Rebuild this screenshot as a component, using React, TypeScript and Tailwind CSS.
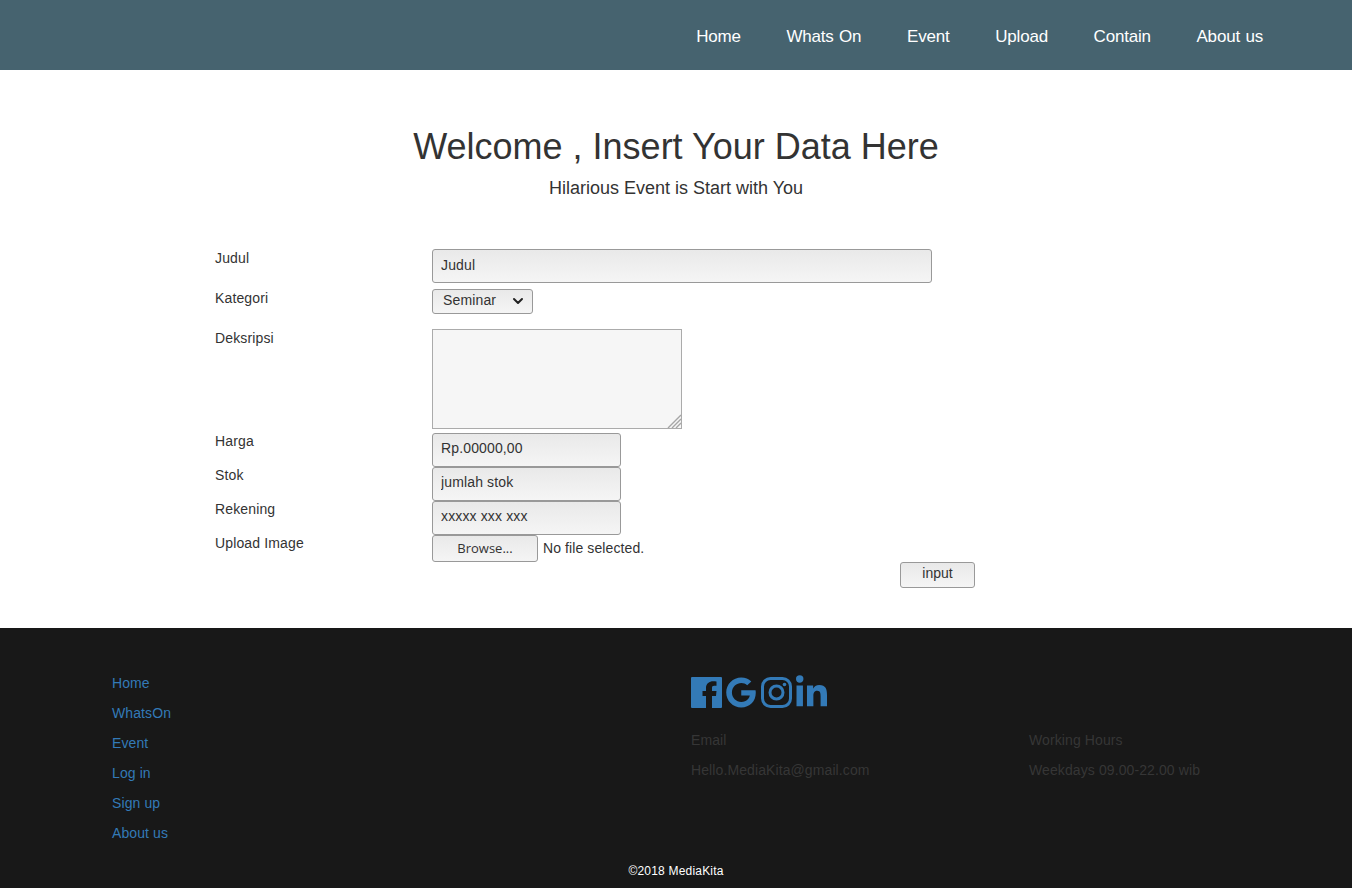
import { ChevronDown } from 'lucide-react';
import { FaGoogle, FaLinkedinIn } from 'react-icons/fa';

const navItems = ['Home', 'Whats On', 'Event', 'Upload', 'Contain', 'About us'];
const footerLinks = ['Home', 'WhatsOn', 'Event', 'Log in', 'Sign up', 'About us'];

const inputClass =
  'block h-[34px] rounded-[3px] border border-[#999] bg-gradient-to-b from-[#e9e9e9] to-[#f5f5f5] px-2 text-[14px] tracking-[0.14px] text-[#333] outline-none';

function Label({ children }: { children: string }) {
  return <div className="text-[14px] leading-[20px] tracking-[0.14px] text-[#333]">{children}</div>;
}

export default function App() {
  return (
    <div className="min-h-[888px] bg-white font-['Liberation_Sans',Arial,sans-serif] text-[#333]">
      {/* Header */}
      <header className="flex h-[70px] items-center justify-end gap-[45.7px] bg-[#46636f] pr-[89px] pt-[3px]">
        {navItems.map((item) => (
          <a key={item} className="text-[17px] tracking-[-0.2px] [word-spacing:1px] text-white">
            {item}
          </a>
        ))}
      </header>

      {/* Heading */}
      <div className="pt-[53px] text-center">
        <h1 className="text-[36px] leading-[48px]">Welcome , Insert Your Data Here</h1>
        <p className="mt-[4px] text-[18px] leading-[26px]">Hilarious Event is Start with You</p>
      </div>

      {/* Form */}
      <form className="ml-[215px] mt-[48px] w-[760px]">
        <div className="flex h-[40px]">
          <div className="w-[217px] -mt-[1px]"><Label>Judul</Label></div>
          <input readOnly defaultValue="Judul" className={`${inputClass} w-[500px] pb-[3px]`} />
        </div>
        <div className="flex h-[40px]">
          <div className="w-[217px] -mt-[1px]"><Label>Kategori</Label></div>
          <div className="relative h-[25px] w-[101px]">
            <select className="block h-[25px] w-full appearance-none rounded-[3px] border border-[#999] bg-gradient-to-b from-[#e9e9e9] to-[#f5f5f5] pl-[10px] pb-[2px] text-[14px] tracking-[0.14px] text-[#333] outline-none">
              <option>Seminar</option>
            </select>
            <ChevronDown className="pointer-events-none absolute right-[7px] top-[4px] h-[16px] w-[16px] text-[#222]" strokeWidth={3} />
          </div>
        </div>
        <div className="flex h-[104px]">
          <div className="w-[217px] -mt-[1px]"><Label>Deksripsi</Label></div>
          <div className="relative h-[100px] w-[250px]">
            <textarea className="block h-full w-full resize-none border border-[#ababab] bg-[#f6f6f6] outline-none" />
            <svg className="absolute bottom-[1px] right-[1px] h-[14px] w-[14px]" viewBox="0 0 14 14" stroke="#a6a6a6" strokeWidth="1.4">
              <path d="M1 14 14 1M5 14 14 5M9 14 14 9" fill="none" />
            </svg>
          </div>
        </div>
        <div className="flex h-[34px]">
          <div className="w-[217px] -mt-[2px]"><Label>Harga</Label></div>
          <input readOnly defaultValue="Rp.00000,00" className={`${inputClass} w-[189px] pb-[5px]`} />
        </div>
        <div className="flex h-[34px]">
          <div className="w-[217px] -mt-[2px]"><Label>Stok</Label></div>
          <input readOnly defaultValue="jumlah stok" className={`${inputClass} w-[189px] pb-[5px]`} />
        </div>
        <div className="flex h-[34px]">
          <div className="w-[217px] -mt-[2px]"><Label>Rekening</Label></div>
          <input readOnly defaultValue="xxxxx xxx xxx" className={`${inputClass} w-[189px] pb-[5px]`} />
        </div>
        <div className="flex h-[27px]">
          <div className="w-[217px] -mt-[2px]"><Label>Upload Image</Label></div>
          <div className="flex items-center gap-[5px]">
            <button type="button" className="h-[27px] w-[106px] rounded-[3px] border border-[#999] bg-gradient-to-b from-[#e9e9e9] to-[#f5f5f5] font-['Open_Sans',sans-serif] text-[13px] text-[#333]">
              Browse...
            </button>
            <span className="text-[14px] tracking-[0.1px] text-[#333]">No file selected.</span>
          </div>
        </div>
        <div className="flex justify-end">
          <button type="button" className="h-[26px] w-[75px] rounded-[3px] border border-[#999] bg-gradient-to-b from-[#e9e9e9] to-[#f5f5f5] pb-[4px] text-[14px] text-[#333]">
            input
          </button>
        </div>
      </form>

      {/* Footer */}
      <footer className="relative mt-[40px] h-[260px] bg-[#181818] pl-[112px] pt-[40px] text-[14px] tracking-[0.1px]">
        <div className="flex">
          <ul className="w-[579px] leading-[30px] text-[#337ab7]">
            {footerLinks.map((link) => (
              <li key={link}>{link}</li>
            ))}
          </ul>
          <div className="w-[338px]">
            <div className="flex h-[47px] items-start pt-[9px] text-[#337ab7]">
              <svg className="h-[31px] w-[31px]" viewBox="0 0 31 31" fill="currentColor">
                <path d="M1 0H30a1 1 0 0 1 1 1V30a1 1 0 0 1-1 1H21V19H25L25.5 14H21V11C21 9.5 21.5 8.8 23.3 8.8H25.5V4.5C24.5 4.4 23.3 4.3 22 4.3C18.5 4.3 15 6.5 15 10.8V14H11.5V19H15V31H1a1 1 0 0 1-1-1V1a1 1 0 0 1 1-1Z" />
              </svg>
              <FaGoogle className="ml-[4px] h-[31px] w-[30px]" />
              <svg className="ml-[5px] h-[31px] w-[31px]" viewBox="0 0 31 31" fill="none" stroke="currentColor" strokeWidth="3">
                <rect x="1.5" y="1.5" width="28" height="28" rx="8" />
                <circle cx="15.5" cy="15.5" r="6.5" />
                <circle cx="23.5" cy="7.5" r="1.8" fill="currentColor" stroke="none" />
              </svg>
              <FaLinkedinIn className="ml-[4px] -mt-[2.5px] h-[36px] w-[31px]" />
            </div>
            <div className="mt-[10px] leading-[30px] text-[#363636]">
              <p>Email</p>
              <p>Hello.MediaKita@gmail.com</p>
            </div>
          </div>
          <div className="pt-[57px] leading-[30px] text-[#363636]">
            <p>Working Hours</p>
            <p>Weekdays 09.00-22.00 wib</p>
          </div>
        </div>
        <p className="absolute bottom-[10px] left-0 w-full text-center text-[12px] leading-[14px] tracking-[0.2px] text-white">©2018 MediaKita</p>
      </footer>
    </div>
  );
}
